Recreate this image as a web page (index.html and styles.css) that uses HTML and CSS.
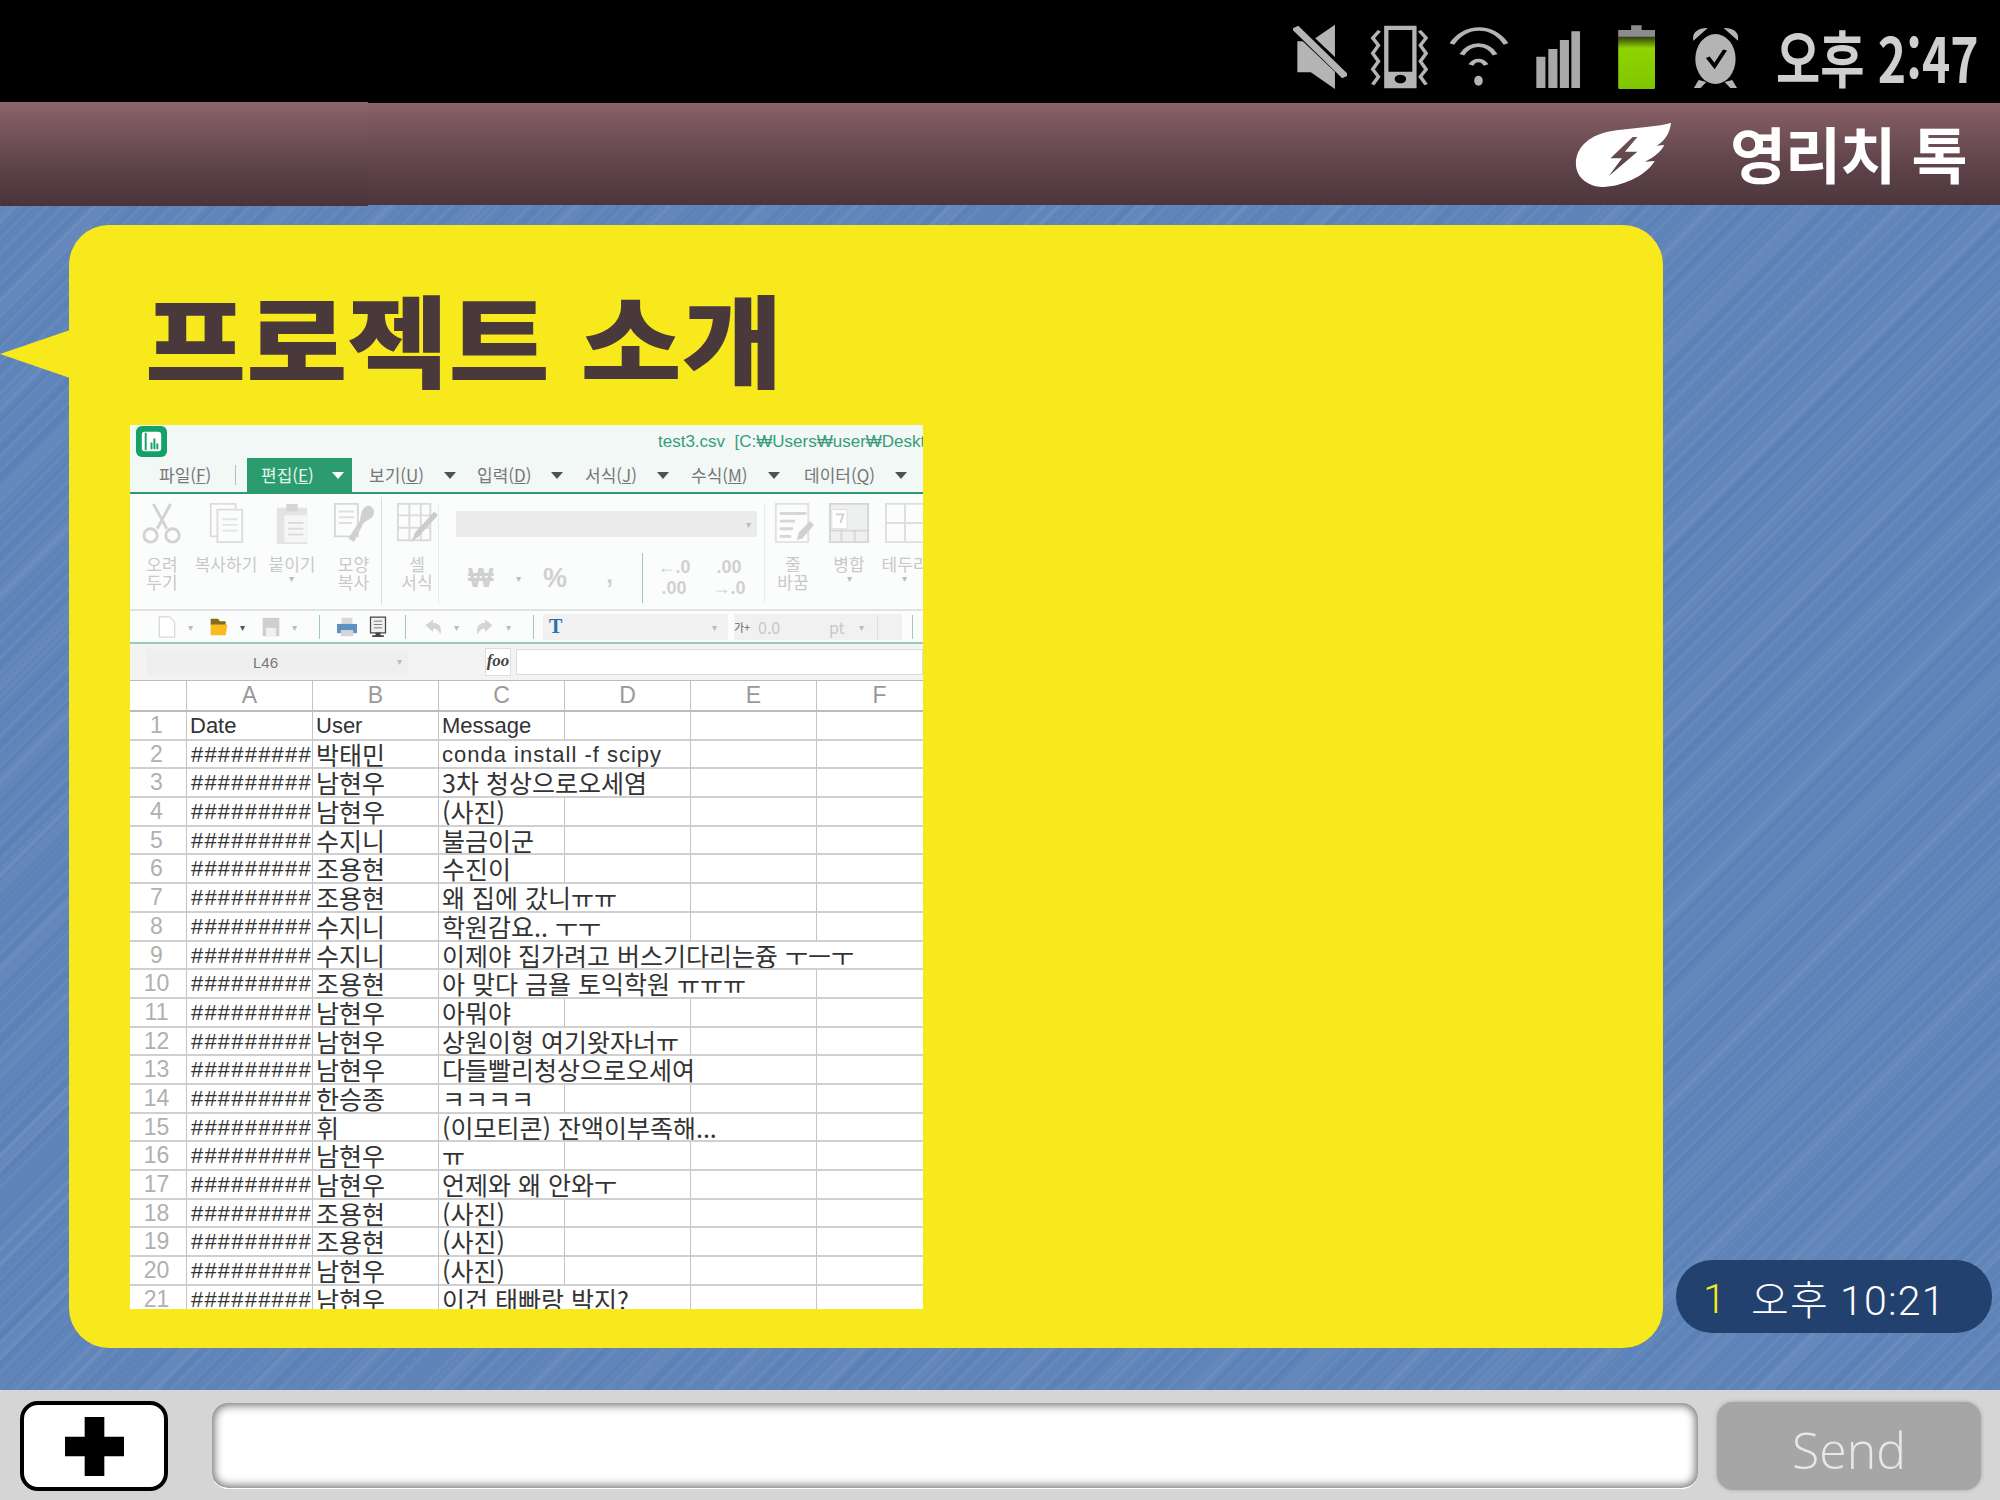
FILE: index.html
```html
<!DOCTYPE html>
<html lang="ko">
<head>
<meta charset="utf-8">
<title>영리치 톡</title>
<link rel="stylesheet" href="styles.css">
</head>
<body>
<div class="app">
  <header class="status">
    <svg class="ic w-mute" viewBox="88 70 112 195" preserveAspectRatio="none"><path fill="#b4b4b4" d="M97 122h28l50-50v193l-50-50H97z"/><path stroke="#000" stroke-width="26" d="M84 66l116 160"/><path stroke="#b4b4b4" stroke-width="17" d="M92 80l105 148"/></svg>
    <svg class="ic w-vib" viewBox="200 70 170 195" preserveAspectRatio="none"><path fill="none" stroke="#b4b4b4" stroke-width="8" d="M268 90l-14 22 12 22-12 24 12 24-12 24 12 22-12 24M352 90l14 22-12 22 12 24-12 24 12 24-12 22 12 24"/><path fill="#b4b4b4" fill-rule="evenodd" d="M278 75h68v188h-68zM287 88v125h50V88zM312 222a12 13 0 1 0 .1 0z"/></svg>
    <svg class="ic w-wifi" viewBox="370 70 168 195" preserveAspectRatio="none"><g fill="none" stroke="#b4b4b4" stroke-width="11"><path d="M420 130c30-60 85-60 114 0"/><path d="M441 162c18-38 52-38 70 0"/><path d="M460 193c8-18 24-18 32 0"/></g><ellipse cx="476" cy="240" rx="9" ry="15" fill="#b4b4b4"/></svg>
    <svg class="ic w-sig" viewBox="538 70 150 195" preserveAspectRatio="none"><path fill="#a8a8a8" d="M597 168h19v94h-19zM622 145h19v117h-19zM646 118h19v144h-19zM670 92h18v170h-18z"/></svg>
    <svg class="ic w-bat" viewBox="688 70 157 195" preserveAspectRatio="none"><defs><linearGradient id="bat" x1="0" y1="0" x2="0" y2="1"><stop offset="0" stop-color="#2d3a10"/><stop offset=".22" stop-color="#8fd400"/><stop offset="1" stop-color="#7fc600"/></linearGradient></defs><path fill="#8c8c8c" d="M795 74h22v14h28v24h-77V88h27z"/><path fill="url(#bat)" d="M768 108h77v153q0 5-5 5h-67q-5 0-5-5z"/></svg>
    <svg class="ic w-alm" viewBox="845 70 173 195" preserveAspectRatio="none"><g fill="#b4b4b4"><path d="M925 120c-4-26 12-40 30-38zM1018 120c4-26-12-40-30-38z"/><path d="M936 238l-10 24h14l12-18zM1006 238l10 24h-14l-12-18z"/></g><ellipse cx="971" cy="175" rx="42" ry="75" fill="#b4b4b4"/><path fill="none" stroke="#000" stroke-width="9" d="M955 170l14 26 22-48"/></svg>
    <span class="clock">오후 2:47</span>
  </header>

  <div class="titlebar">
    <svg class="logo" viewBox="680 370 200 195" preserveAspectRatio="none"><path fill="#fff" fill-rule="evenodd" d="M880 372c-34 16-95 14-140 30-42 18-60 58-58 98 2 40 28 66 58 65 48-4 92-42 106-78l-20 2c20-14 34-32 40-50l-16 2c20-18 28-42 30-69zM800 415l-46 64h24l-28 54 60-74h-26l26-44z"/></svg>
    <span class="brand">영리치 톡</span>
  </div>

  <main class="chat">
    <section class="bubble">
      <svg class="tail" viewBox="0 0 70 48" preserveAspectRatio="none"><path fill="#f7e91c" d="M70 0v48L0 24z"/></svg>
      <h1 class="heading">프로젝트 소개</h1>
      <div class="sheet">
        <div class="wintitle">
          <svg class="appicon" viewBox="0 0 32 32"><rect width="32" height="32" rx="6" fill="#12a267"/><rect x="6" y="6" width="20" height="20" rx="3" fill="#fff"/><path fill="#12a267" d="M9 7h2v18H9zM15 17h2v7h-2zM18 13h2v11h-2zM21 18h2v6h-2z"/></svg>
          <span class="filename">test3.csv&nbsp; [C:₩Users₩user₩Desktop₩</span>
        </div>
        <nav class="menu">
          <span class="m-file">파일(<u>F</u>)</span><i class="m-sep"></i>
          <span class="m-tab">편집(<u>E</u>)<b class="caret white"></b></span>
          <span class="m-it w108">보기(<u>U</u>)<b class="caret"></b></span>
          <span class="m-it w108">입력(<u>D</u>)<b class="caret"></b></span>
          <span class="m-it w106">서식(<u>J</u>)<b class="caret"></b></span>
          <span class="m-it w113">수식(<u>M</u>)<b class="caret"></b></span>
          <span class="m-it">데이터(<u>Q</u>)<b class="caret"></b></span>
        </nav>
        <div class="ribbon">
          <div class="tool w64"><svg class="rib-ic" viewBox="0 0 44 44"><g fill="none" stroke="#d2d2d2" stroke-width="3"><path d="M13 2l14 26M31 2L17 28"/><circle cx="10" cy="35" r="7"/><circle cx="33" cy="35" r="7"/></g></svg><span>오려<br>두기</span></div>
          <div class="tool w64"><svg class="rib-ic" viewBox="0 0 44 44"><g fill="#fbfdfc" stroke="#dcdcdc" stroke-width="2"><path d="M6 2h26v34H6z"/><path d="M13 8h26v34H13z"/></g><path stroke="#e4e4e4" stroke-width="2" d="M18 18h16M18 24h16M18 30h16"/></svg><span>복사하기</span></div>
          <div class="tool w68"><svg class="rib-ic" viewBox="0 0 44 44"><path fill="#e4e4e4" d="M6 6h32v38H6z"/><path fill="#d6d6d6" d="M16 2h12v8H16z"/><path fill="#f5f7f6" d="M14 14h24v28H14z"/><path stroke="#dcdcdc" stroke-width="2" d="M18 22h16M18 28h16M18 34h16"/></svg><span>붙이기<em class="mini">▾</em></span></div>
          <div class="tool w55"><svg class="rib-ic" viewBox="0 0 44 44"><path fill="#fbfdfc" stroke="#d8d8d8" stroke-width="2" d="M2 2h24v34H2z"/><path stroke="#e0e0e0" stroke-width="2" d="M6 10h16M6 16h16M6 22h14"/><path fill="#d0d0d0" d="M38 4c6 2 6 8 3 12l-9 6-10 20-6-4 12-18 2-10c2-4 5-7 8-6z"/></svg><span>모양<br>복사</span></div>
          <i class="rib-div"></i>
          <div class="tool tool-cell"><svg class="rib-ic" viewBox="0 0 44 44"><path fill="none" stroke="#dadada" stroke-width="2" d="M2 2h34v38H2zM14 2v38M26 2v38M2 14h34M2 27h34"/><path fill="#cccccc" d="M40 10l4 4-20 22-8 6 4-10z"/></svg><span>셀<br>서식</span></div>
          <i class="rib-div light"></i>
          <div class="numfmt">
            <div class="combo"><em class="mini">▾</em></div>
            <div class="numrow">
              <span class="num-won">₩</span><em class="mini">▾</em>
              <span class="num-pct">%</span><span class="num-com">,</span>
              <i class="num-div"></i>
              <span class="num-dec">←.0<br>.00</span><span class="num-dec">.00<br>→.0</span>
            </div>
          </div>
          <i class="rib-div light"></i>
          <div class="tool w56"><svg class="rib-ic" viewBox="0 0 44 44"><path fill="#fbfdfc" stroke="#e0e0e0" stroke-width="2" d="M4 2h34v40H4z"/><path stroke="#d6d6d6" stroke-width="3" d="M8 12h28M8 20h16M8 28h14M8 36h12"/><path fill="#d0d0d0" d="M40 20l4 4-12 14-6 2 2-8z"/></svg><span>줄<br>바꿈</span></div>
          <div class="tool w56"><svg class="rib-ic" viewBox="0 0 44 44"><path fill="#eef0ef" stroke="#d6d6d6" stroke-width="2" d="M2 2h40v40H2zM2 30h40M14 30v12M28 30v12"/><path fill="#fff" stroke="#dcdcdc" stroke-width="1" d="M4 8h16v20H4z"/><path fill="none" stroke="#cfcfcf" stroke-width="2" d="M8 13h8l-3 9"/></svg><span>병합<em class="mini">▾</em></span></div>
          <div class="tool w56"><svg class="rib-ic" viewBox="0 0 44 44"><path fill="none" stroke="#dedede" stroke-width="2" d="M2 2h40v40H2zM22 2v40M2 22h40"/></svg><span>테두리<em class="mini">▾</em></span></div>
        </div>
        <div class="toolbar">
          <svg class="tb doc" viewBox="0 0 20 26"><path fill="#fff" stroke="#d8d8d8" stroke-width="1.5" d="M1 1h12l6 6v18H1z"/></svg><em class="mini">▾</em>
          <svg class="tb" viewBox="0 0 24 24"><path fill="#8a6a1c" d="M2 2h9l2 3h7v5H2z"/><path fill="#f9bb1e" d="M2 9h20l-2 13H2z"/></svg><em class="mini dark">▾</em>
          <svg class="tb" viewBox="0 0 24 24"><path fill="#cfcfcf" d="M2 1h20v22H2z"/><path fill="#f0f0f0" d="M6 13h12v10H6z"/></svg><em class="mini">▾</em>
          <i class="tb-sep"></i>
          <svg class="tb" viewBox="0 0 26 24"><path fill="#d8d8d8" d="M6 0h14v8H6z"/><path fill="#5d93c3" d="M0 8h26v12H0z"/><path fill="#d5d5d5" d="M5 16h16v8H5z"/></svg>
          <svg class="tb" viewBox="0 0 24 26"><path fill="#f0f0f0" stroke="#444" stroke-width="1.5" d="M3 1h18v19H3z"/><path stroke="#666" d="M7 6h10M7 10h10M7 14h10"/><path fill="#444" d="M9 20h6v3h4v2H5v-2h4z"/></svg>
          <i class="tb-sep"></i>
          <svg class="tb" viewBox="0 0 24 20"><path fill="#d4d4d4" d="M3 8l9-7v4c8 0 11 6 9 14-3-6-5-7-9-7v4z"/></svg><em class="mini">▾</em>
          <svg class="tb" viewBox="0 0 24 20"><path fill="#d4d4d4" d="M21 8l-9-7v4C4 5 1 11 3 19c3-6 5-7 9-7v4z"/></svg><em class="mini">▾</em>
          <i class="tb-sep"></i>
          <div class="fontbox"><span class="tt">T</span><em class="mini">▾</em></div>
          <div class="sizebox"><span class="ga">가+</span><span class="val">0.0</span><span class="pt">pt</span><em class="mini">▾</em><i class="spin"></i></div>
          <i class="tb-sep"></i>
        </div>
        <div class="formula">
          <div class="namebox">L46<em class="mini">▾</em></div>
          <span class="fx">foo</span>
          <div class="fxinput"></div>
        </div>
        <div class="grid">
          <div class="c hd"></div><div class="c hd">A</div><div class="c hd">B</div><div class="c hd">C</div><div class="c hd">D</div><div class="c hd">E</div><div class="c hd">F</div>
          <div class="c n">1</div><div class="c t">Date</div><div class="c t">User</div><div class="c t">Message</div><div class="c"></div><div class="c"></div><div class="c"></div>
          <div class="c n">2</div><div class="c h">##########</div><div class="c t k">박태민</div><div class="c t s2 w">conda install -f scipy</div><div class="c"></div><div class="c"></div>
          <div class="c n">3</div><div class="c h">##########</div><div class="c t k">남현우</div><div class="c t k s2">3차 청상으로오세염</div><div class="c"></div><div class="c"></div>
          <div class="c n">4</div><div class="c h">##########</div><div class="c t k">남현우</div><div class="c t k">(사진)</div><div class="c"></div><div class="c"></div><div class="c"></div>
          <div class="c n">5</div><div class="c h">##########</div><div class="c t k">수지니</div><div class="c t k">불금이군</div><div class="c"></div><div class="c"></div><div class="c"></div>
          <div class="c n">6</div><div class="c h">##########</div><div class="c t k">조용현</div><div class="c t k">수진이</div><div class="c"></div><div class="c"></div><div class="c"></div>
          <div class="c n">7</div><div class="c h">##########</div><div class="c t k">조용현</div><div class="c t k s2">왜 집에 갔니ㅠㅠ</div><div class="c"></div><div class="c"></div>
          <div class="c n">8</div><div class="c h">##########</div><div class="c t k">수지니</div><div class="c t k s2">학원감요.. ㅜㅜ</div><div class="c"></div><div class="c"></div>
          <div class="c n">9</div><div class="c h">##########</div><div class="c t k">수지니</div><div class="c t k s4">이제야 집가려고 버스기다리는즁 ㅜㅡㅜ</div>
          <div class="c n">10</div><div class="c h">##########</div><div class="c t k">조용현</div><div class="c t k s3">아 맞다 금욜 토익학원 ㅠㅠㅠ</div><div class="c"></div>
          <div class="c n">11</div><div class="c h">##########</div><div class="c t k">남현우</div><div class="c t k">아뭐야</div><div class="c"></div><div class="c"></div><div class="c"></div>
          <div class="c n">12</div><div class="c h">##########</div><div class="c t k">남현우</div><div class="c t k s2">상원이형 여기왓자너ㅠ</div><div class="c"></div><div class="c"></div>
          <div class="c n">13</div><div class="c h">##########</div><div class="c t k">남현우</div><div class="c t k s3">다들빨리청상으로오세여</div><div class="c"></div>
          <div class="c n">14</div><div class="c h">##########</div><div class="c t k">한승종</div><div class="c t k">ㅋㅋㅋㅋ</div><div class="c"></div><div class="c"></div><div class="c"></div>
          <div class="c n">15</div><div class="c h">##########</div><div class="c t k">휘</div><div class="c t k s3">(이모티콘) 잔액이부족해...</div><div class="c"></div>
          <div class="c n">16</div><div class="c h">##########</div><div class="c t k">남현우</div><div class="c t k">ㅠ</div><div class="c"></div><div class="c"></div><div class="c"></div>
          <div class="c n">17</div><div class="c h">##########</div><div class="c t k">남현우</div><div class="c t k s2">언제와 왜 안와ㅜ</div><div class="c"></div><div class="c"></div>
          <div class="c n">18</div><div class="c h">##########</div><div class="c t k">조용현</div><div class="c t k">(사진)</div><div class="c"></div><div class="c"></div><div class="c"></div>
          <div class="c n">19</div><div class="c h">##########</div><div class="c t k">조용현</div><div class="c t k">(사진)</div><div class="c"></div><div class="c"></div><div class="c"></div>
          <div class="c n">20</div><div class="c h">##########</div><div class="c t k">남현우</div><div class="c t k">(사진)</div><div class="c"></div><div class="c"></div><div class="c"></div>
          <div class="c n">21</div><div class="c h">##########</div><div class="c t k">남현우</div><div class="c t k s2">이건 태빠랑 박지?</div><div class="c"></div><div class="c"></div>
        </div>
      </div>
    </section>
    <div class="stamp"><span class="unread">1</span><span class="time">오후 10:21</span></div>
  </main>

  <footer class="composer">
    <button class="plus"><svg viewBox="0 0 60 60"><path d="M20 0h20v20h20v20H40v20H20V40H0V20h20z"/></svg></button>
    <div class="field"></div>
    <button class="send">Send</button>
  </footer>
</div>
</body>
</html>
```
FILE: styles.css
```css
* { box-sizing: border-box; }
html, body { margin: 0; padding: 0; }
body { width: 2000px; height: 1500px; overflow: hidden; background: #000; font-family: "Noto Sans CJK KR", "Liberation Sans", sans-serif; }
.app { width: 2000px; height: 1500px; display: flex; flex-direction: column; }

/* status bar */
.status { height: 103px; background: #000; display: flex; justify-content: flex-end; align-items: flex-start; padding: 24px 20px 0 0; }
.ic { height: 65px; flex: none; }
.w-mute { width: 54px; } .w-vib { width: 81px; } .w-wifi { width: 80px; } .w-sig { width: 72px; } .w-bat { width: 75px; } .w-alm { width: 83px; }
.clock { width: 204px; margin-left: 38px; white-space: nowrap; color: #cfcfcf; font-size: 62px; font-weight: 700; line-height: 65px; transform: scaleX(.775); transform-origin: left center; }

/* title bar */
.titlebar { position: relative; height: 102px; background: linear-gradient(#8a646a 0, #7b585e 18%, #5f444a 60%, #4c363d 100%); display: flex; justify-content: flex-end; align-items: center; padding-right: 36px; }
.titlebar::before { content: ""; position: absolute; left: 0; top: -1px; bottom: -1px; width: 368px; background: linear-gradient(#8d676c, #7d5a60 18%, #5f444a 60%, #4a343b); }
.logo { width: 96px; height: 65px; margin-right: 59px; }
.brand { width: 234px; white-space: nowrap; color: #fff; font-size: 61px; font-weight: 700; line-height: 70px; letter-spacing: -1px; padding-bottom: 2px; }

/* chat */
.chat { flex: 1; display: flex; padding: 20px 8px 42px 69px; background-color: #5f84b9;
  background-image:
    repeating-linear-gradient(135deg, rgba(255,255,255,.045) 0 3px, transparent 3px 11px),
    repeating-linear-gradient(135deg, rgba(20,50,110,.04) 0 5px, transparent 5px 19px),
    repeating-linear-gradient(135deg, rgba(255,255,255,.035) 0 14px, transparent 14px 67px); }
.bubble { position: relative; width: 1594px; height: 1123px; background: #f7e91c; border-radius: 40px; padding: 0 0 0 61px; flex: none; }
.tail { position: absolute; left: -69px; top: 105px; width: 70px; height: 48px; }
.heading { margin: 0 0 0 15px; height: 200px; padding-top: 24px; color: #4a393b; font-size: 100px; font-weight: 900; line-height: 176px; white-space: nowrap; transform: scaleX(1.1); transform-origin: left center; }
.stamp { flex: none; align-self: flex-end; margin: 0 0 15px 13px; width: 316px; height: 73px; border-radius: 36px; background: #23416f; display: flex; align-items: center; padding-left: 27px; font-family: Roboto, "Noto Sans CJK KR", sans-serif; font-size: 41px; font-weight: 300; }
.unread { color: #f7e91c; width: 48px; padding-top: 4px; }
.time { color: #fff; white-space: nowrap; letter-spacing: 1.2px; }

/* composer */
.composer { height: 110px; background: #d5d5d5; display: flex; padding: 11px 19px 9px 20px; }
.plus { width: 148px; height: 90px; background: #fff; border: 4px solid #000; border-radius: 18px; display: flex; align-items: center; justify-content: center; padding: 0; }
.plus svg { width: 59px; height: 59px; }
.field { width: 1486px; height: 86px; margin: 2px 0 0 44px; background: #fff; border-radius: 16px; box-shadow: inset 0 0 10px 2px #6a6a6a; border-bottom: 1px solid #fff; }
.send { width: 264px; height: 88px; margin: 1px 0 0 19px; background: #a6a6a6; border: 0; border-radius: 16px; box-shadow: 0 0 4px #a6a6a6; color: #e8e8e8; font: 300 50px "Open Sans", sans-serif; padding: 8px 0 0; }

/* sheet */
.sheet { width: 793px; height: 884px; overflow: hidden; background: #f1f8f5; display: flex; flex-direction: column; font-size: 17px; }
.wintitle { height: 33px; display: flex; align-items: center; padding-left: 6px; flex: none; }
.appicon { width: 31px; height: 31px; flex: none; }
.filename { margin-left: 491px; white-space: nowrap; color: #3a9c7b; font: 17px "Liberation Sans", "Noto Sans CJK KR", sans-serif; }
.menu { height: 36px; flex: none; display: flex; align-items: center; border-bottom: 2px solid #2f9a70; color: #777; font-size: 17px; line-height: 34px; padding-left: 29px; }
.m-file { width: 76px; white-space: nowrap; }
.m-sep { width: 1px; height: 20px; background: #bbb; }
.m-tab { margin-left: 11px; width: 105px; height: 34px; background: #2b9c6e; color: #e8f5ef; padding-left: 14px; display: flex; align-items: center; white-space: nowrap; margin-right: 17px; }
.m-it { display: flex; align-items: center; white-space: nowrap; }
.w108 { width: 108px; } .w106 { width: 106px; } .w113 { width: 113px; }
.caret { width: 0; height: 0; border: 6px solid transparent; border-top: 7px solid #4a5550; border-bottom: 0; margin-left: 20px; }
.caret.white { border-top-color: #fff; margin-left: 18px; }

.ribbon { height: 117px; flex: none; display: flex; background: #fbfdfc; border-bottom: 2px solid #e2e2e2; color: #c8c8c8; font-size: 17px; line-height: 18px; }
.tool { display: flex; flex-direction: column; align-items: center; text-align: center; padding-top: 8px; white-space: nowrap; flex: none; }
.tool span { margin-top: 11px; display: block; }
.rib-ic { width: 42px; height: 42px; }
.w64 { width: 64px; } .w68 { width: 68px; } .w55 { width: 55px; } .w56 { width: 56px; }
.tool-cell { width: 56px; padding-left: 14px; }
.rib-div { width: 1px; height: 108px; margin-top: 3px; background: #d8dedb; flex: none; }
.rib-div.light { background: #e8eeeb; margin-top: 10px; height: 100px; }
.mini { font-style: normal; font-size: 10px; color: #bcbcbc; line-height: 10px; }
.mini.dark { color: #555; }
.tool .mini { display: block; }
.numfmt { width: 325px; flex: none; padding: 17px 10px 0 17px; }
.combo { height: 26px; width: 301px; background: #ececec; display: flex; justify-content: flex-end; align-items: center; padding-right: 6px; }
.numrow { display: flex; align-items: center; height: 64px; margin-top: 9px; color: #d0d0d0; }
.num-won { font: 700 27px "Liberation Sans", "Noto Sans CJK KR", sans-serif; margin-left: 12px; width: 48px; }
.num-pct { font: 700 27px "Liberation Sans", sans-serif; margin-left: 22px; width: 43px; }
.num-com { font: 700 26px "Liberation Sans", sans-serif; margin-left: 20px; width: 36px; padding-bottom: 8px; }
.num-div { width: 1px; height: 50px; background: #9cc9b8; }
.num-dec { font: 700 18px/21px "Liberation Sans", "Noto Sans CJK KR", sans-serif; width: 48px; text-align: center; margin-left: 7px; white-space: nowrap; }

.toolbar { height: 33px; flex: none; display: flex; align-items: center; background: #fbfdfc; border-bottom: 2px solid #9cc9b8; padding-left: 27px; gap: 11px; }
.tb { width: 20px; height: 22px; flex: none; }
.tb-sep { width: 1px; height: 24px; background: #9cc9b8; flex: none; margin: 0 6px; }
.toolbar .mini { width: 10px; }
.fontbox { width: 185px; height: 26px; background: #f1f1f1; display: flex; align-items: center; justify-content: space-between; padding: 0 6px; margin-left: -8px; flex: none; }
.tt { color: #2b6ea8; font: 700 20px "Liberation Serif", serif; }
.sizebox { width: 168px; height: 26px; background: #f1f1f1; display: flex; align-items: center; flex: none; color: #c8c8c8; font-size: 16px; margin: 0 -7px 0 -5px; }
.ga { color: #666; font-size: 11px; width: 24px; }
.val { width: 71px; }
.pt { width: 30px; }
.spin { width: 16px; height: 24px; border-left: 1px solid #ddd; margin-left: 8px; }

.formula { height: 36px; flex: none; display: flex; align-items: center; background: #f3f3f3; padding-left: 17px; }
.namebox { width: 261px; height: 26px; background: #efefef; color: #777; font: 15px "Liberation Sans", sans-serif; display: flex; align-items: center; justify-content: space-between; padding: 0 6px 0 106px; flex: none; }
.fx { width: 26px; height: 28px; margin-left: 77px; background: #fff; border: 1px solid #ddd; color: #444; font: italic 700 17px/24px "Liberation Serif", serif; text-align: center; flex: none; }
.fxinput { flex: 1; height: 26px; margin-left: 5px; background: #fff; border: 1px solid #dcdcdc; }

.grid { flex: 1; background: #fff; display: grid; grid-template-columns: 57px 126px 126px 126px 126px 126px 126px; grid-template-rows: 31px; grid-auto-rows: 28.7px; font: 22px/26px "Liberation Sans", "Noto Sans CJK KR", sans-serif; color: #333; border-top: 1px solid #bbb; }
.c { border-right: 1px solid #c4c4c4; border-bottom: 2px solid #d0d0d0; white-space: nowrap; overflow: hidden; min-width: 0; padding-top: 1px; }
.hd { text-align: center; color: #999; border-bottom-color: #bbb; font-size: 23px; }
.n { text-align: center; color: #b0b0b0; font-size: 23px; padding-top: 0; padding-right: 3px; }
.t { padding-left: 3px; }
.k { font: 400 25px/26px "Noto Sans CJK KR", sans-serif; padding-top: 0; }
.w { letter-spacing: 1px; }
.h { padding-left: 4px; letter-spacing: 1.2px; }
.s2 { grid-column: span 2; } .s3 { grid-column: span 3; } .s4 { grid-column: span 4; }
```
